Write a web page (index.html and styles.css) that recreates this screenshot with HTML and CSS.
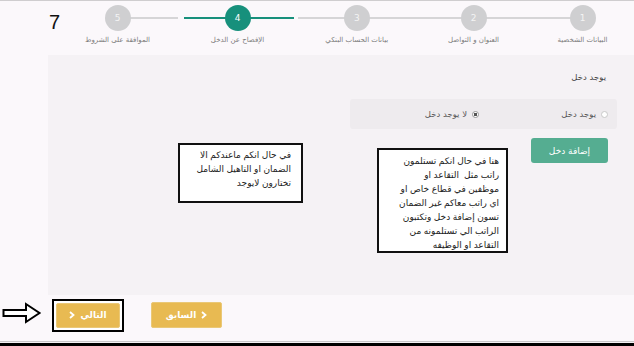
FILE: index.html
```html
<!DOCTYPE html>
<html lang="ar">
<head>
  <meta charset="UTF-8" />
  <meta name="viewport" content="width=device-width, initial-scale=1.0" />
  <title>الإفصاح عن الدخل</title>
  <link rel="stylesheet" href="styles.css">
</head>
<body>
  <div class="page">
    <div class="header">
      <div class="num">7</div>
      <div class="steps" dir="rtl">
        <div class="step first">
          <div class="circle">1</div>
          <div class="label">البيانات الشخصية</div>
        </div>
        <div class="step">
          <div class="circle">2</div>
          <div class="label">العنوان و التواصل</div>
        </div>
        <div class="step">
          <div class="circle">3</div>
          <div class="label">بيانات الحساب البنكي</div>
        </div>
        <div class="step active">
          <div class="circle">4</div>
          <div class="label">الإفصاح عن الدخل</div>
        </div>
        <div class="step last">
          <div class="circle">5</div>
          <div class="label">الموافقة على الشروط</div>
        </div>
      </div>
    </div>

    <div class="panel">
      <div class="form" dir="rtl">
        <div class="field-label">يوجد دخل</div>
        <div class="radios">
          <label class="option"><span class="radio"></span>يوجد دخل</label>
          <label class="option"><span class="radio checked"></span>لا يوجد دخل</label>
        </div>
        <button class="btn-add">إضافة دخل</button>
      </div>

      <!-- notes drawn over the screen -->
      <div class="note note-a" dir="rtl">في حال انكم ماعندكم الا<br>الضمان او التاهيل الشامل<br>تختارون لايوجد</div>
      <div class="note note-b" dir="rtl">هنا في حال انكم تستلمون<br>راتب مثل&nbsp; التقاعد او<br>موظفين في قطاع خاص او<br>اي راتب معاكم غير الضمان<br>تسون إضافة دخل وتكتبون<br>الراتب الي تستلمونه من<br>التقاعد او الوظيفه</div>
    </div>

    <div class="footer">
      <svg class="arrow" width="40" height="22" viewBox="0 0 40 22">
        <polygon points="1.5,8 24,8 24,2 37.5,11 24,20 24,14 1.5,14" fill="#fff" stroke="#000" stroke-width="2" stroke-linejoin="miter"/>
      </svg>
      <div class="frame">
        <button class="btn-wizard">
          <svg class="chev" width="6" height="8" viewBox="0 0 6 8"><path d="M1 1 L4.5 4 L1 7" fill="none" stroke="#fff" stroke-width="1.8"/></svg>
          <span>التالي</span>
        </button>
      </div>
      <button class="btn-wizard prev">
        <span>السابق</span>
        <svg class="chev" width="6" height="8" viewBox="0 0 6 8"><path d="M1 1 L4.5 4 L1 7" fill="none" stroke="#fff" stroke-width="1.8"/></svg>
      </button>
    </div>

    <div class="bottom"></div>
  </div>
</body>
</html>
```

FILE: styles.css
```css
:root {
  --bg: #fbf8fb;
  --panel: #f5f2f5;
  --teal: #17907c;
  --grey-step: #cfcfd1;
  --green: #55ad91;
  --yellow: #e8ba52;
  --font: "DejaVu Sans", sans-serif;
}
* {
  box-sizing: border-box;
}
body {
  margin: 0;
  background: var(--bg);
  font-family: var(--font);
  overflow: hidden;
}
.page {
  height: 346px;
  display: flex;
  flex-direction: column;
  border-top: 1px solid #cfcdcf;
}

/* stepper */
.header {
  height: 54px;
  display: flex;
}
.num {
  width: 57px;
  padding: 10px 0 0 49px;
  font-family: "Liberation Sans", sans-serif;
  font-size: 20px;
  color: #111;
}
.steps {
  flex: 1;
  display: grid;
  grid-template-columns: 103px 115px 118.5px 120px 120px;
}
.step {
  position: relative;
  display: flex;
  flex-direction: column;
  align-items: center;
}
.step::before {
  content: "";
  position: absolute;
  top: 16px;
  left: 0;
  right: 0;
  height: 2px;
  background: #d6d5d7;
}
.step.first::before {
  right: 50%;
}
.step.last::before {
  left: 50%;
}
.step.active::before {
  background: var(--teal);
  left: 6px;
  right: 4px;
}
.circle {
  position: relative;
  width: 26px;
  height: 26px;
  margin-top: 4px;
  border-radius: 50%;
  background: var(--grey-step);
  color: #f4f4f4;
  font-size: 9px;
  line-height: 26px;
  text-align: center;
}
.step.active .circle {
  background: var(--teal);
  color: #fff;
}
.label {
  margin-top: 4px;
  font-size: 7px;
  line-height: 10px;
  color: #7c7c7c;
  white-space: nowrap;
}

/* form panel */
.panel {
  position: relative;
  height: 240px;
  margin-left: 48px;
  background: var(--panel);
}
.form {
  padding: 15px 17px 0 0;
}
.field-label {
  margin-right: 11px;
  font-size: 8.5px;
  line-height: 14px;
  color: #444;
}
.radios {
  width: 267px;
  height: 30px;
  margin-top: 15px;
  display: grid;
  grid-template-columns: 1fr 1fr;
  align-items: center;
  padding-right: 9px;
  background: #eeebee;
  border-radius: 3px;
}
.option {
  display: flex;
  align-items: center;
  gap: 5px;
  font-size: 8.5px;
  color: #555;
}
.radio {
  width: 7px;
  height: 7px;
  border-radius: 50%;
  border: 1px solid #c9c9c9;
  background: #fff;
}
.radio.checked {
  border-color: #999;
  background: radial-gradient(circle, #555 0 1.6px, #fff 2px);
}
.btn-add {
  display: block;
  width: 77px;
  height: 25px;
  margin: 9px 9px 0 0;
  border: 0;
  border-radius: 3px;
  background: var(--green);
  color: #fff;
  font-family: var(--font);
  font-size: 9px;
}

/* annotation boxes */
.note {
  position: absolute;
  background: #fff;
  border: 2px solid #111;
  font-family: "Liberation Sans", "DejaVu Sans", sans-serif;
  font-size: 9px;
  line-height: 14px;
  color: #222;
  text-align: right;
  white-space: nowrap;
}
.note-a {
  left: 130px;
  top: 88px;
  width: 125px;
  height: 60px;
  padding: 3px 10px 0 0;
}
.note-b {
  left: 329px;
  top: 93px;
  width: 131px;
  height: 105px;
  padding: 4px 7px 0 0;
}

/* wizard buttons */
.footer {
  height: 46px;
  display: flex;
  align-items: center;
  padding: 0 0 6px 2px;
}
.arrow {
  margin-top: -4px;
}
.frame {
  margin-left: 10px;
  border: 2px solid #000;
  padding: 2px;
  background: #fff;
}
.btn-wizard {
  display: flex;
  align-items: center;
  justify-content: center;
  gap: 5px;
  width: 64px;
  height: 25px;
  border: 1px solid #eac877;
  border-radius: 2px;
  background: var(--yellow);
  color: #fff;
  font-family: var(--font);
  font-size: 9px;
  font-weight: bold;
  padding: 0;
}
.btn-wizard.prev {
  width: 71px;
  height: 26px;
  margin-left: 27px;
}
.bottom {
  height: 5px;
  border-top: 1px solid #c8c6c8;
  border-bottom: 3px solid #000;
  background: #f3f0f3;
}
```
